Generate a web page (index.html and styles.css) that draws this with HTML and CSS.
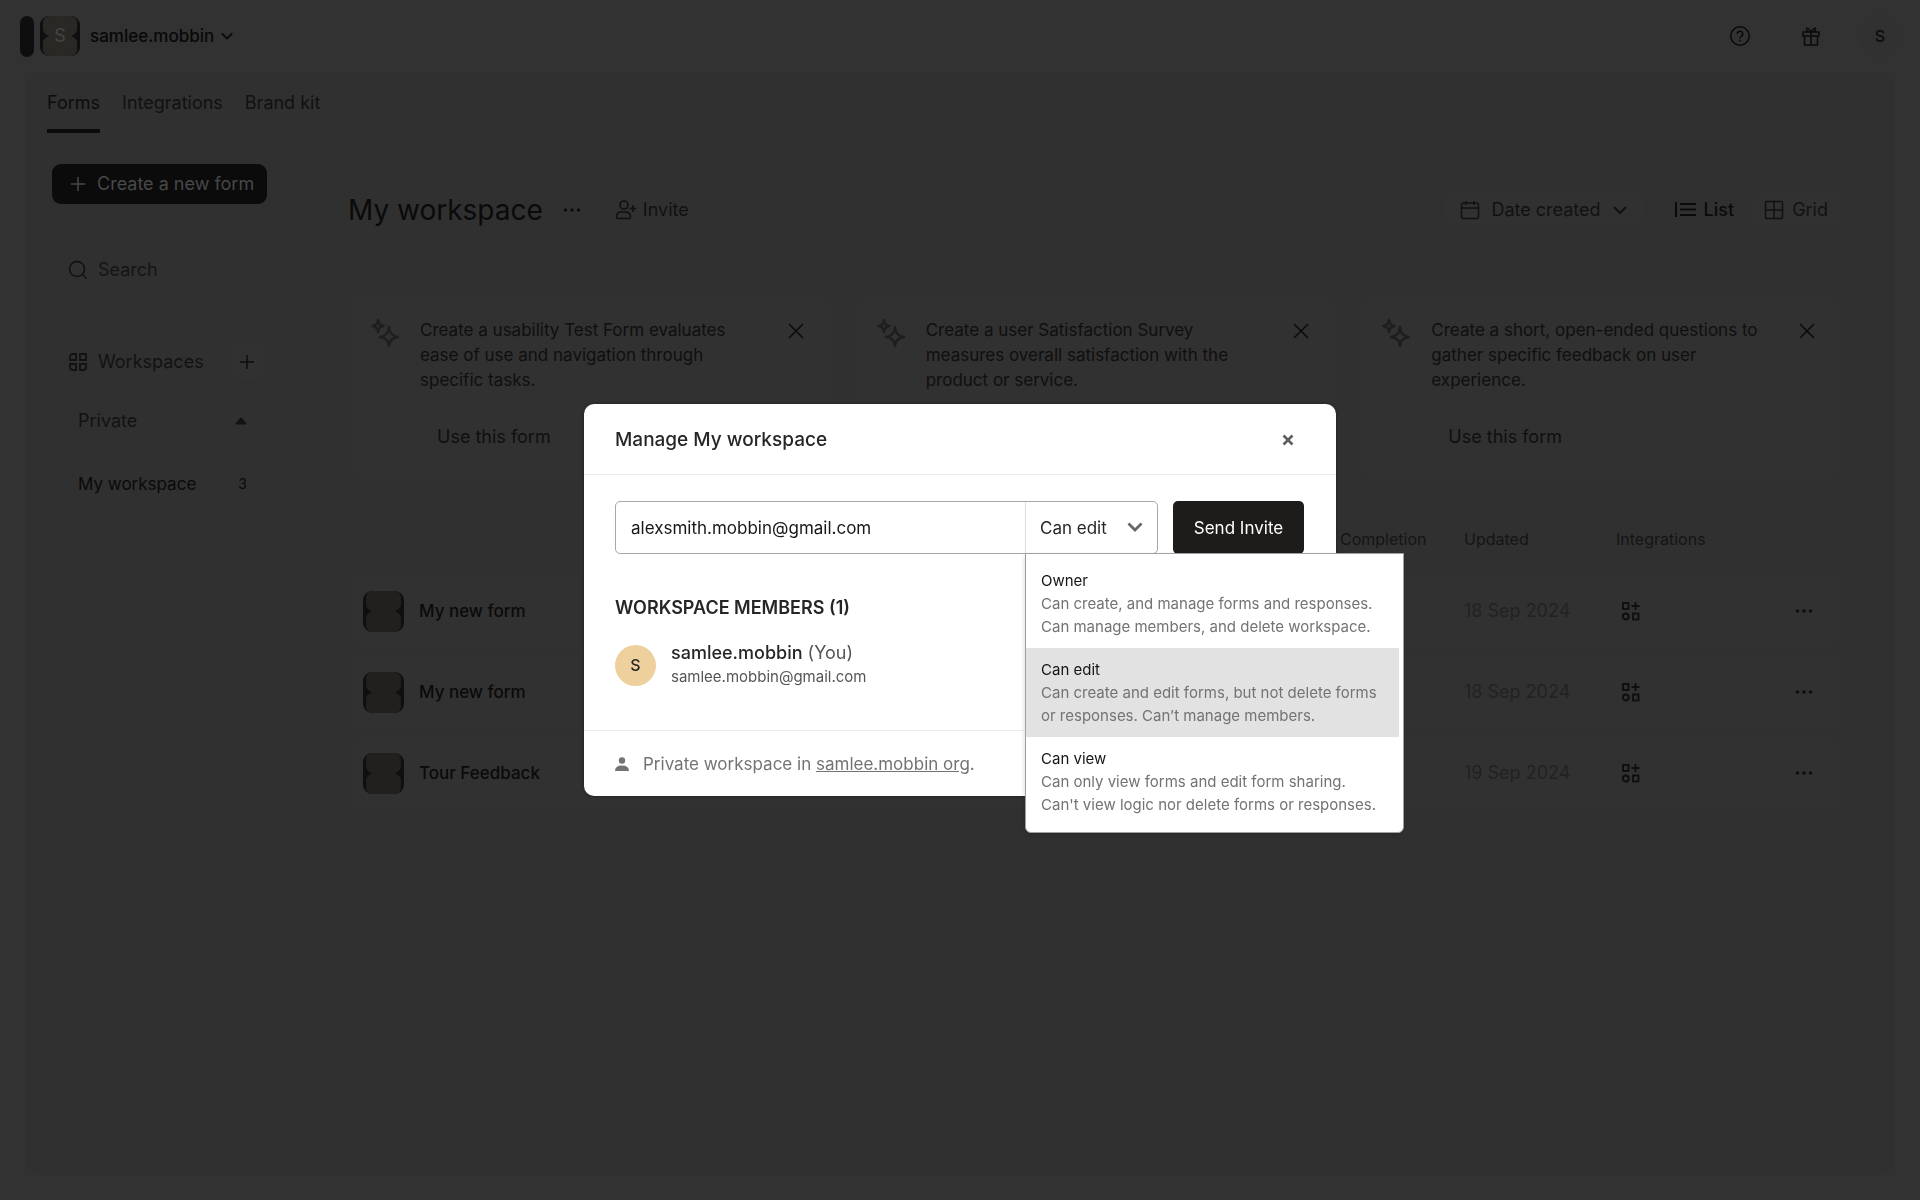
FILE: index.html
```html
<!DOCTYPE html>
<html lang="en">
<head>
<meta charset="utf-8">
<title>My workspace</title>
<meta name="viewport" content="width=device-width, initial-scale=1">
<link rel="stylesheet" href="styles.css">
</head>
<body>
<svg class="defs" aria-hidden="true">
  <symbol id="thumb" viewBox="0 0 40 40"><rect width="40" height="40" rx="9" fill="#0f0f0f"/><path d="M9 0H31Q36 1 37 5V14Q36 18 31 20Q36 22 37 25V35Q36 39 31 40H9Q4 39 3 35V25Q4 22 9 20Q4 18 3 14V5Q4 1 9 0Z" fill="currentColor"/></symbol>
  <symbol id="chevron" viewBox="0 0 16 16"><path d="M2 5l6 6 6-6" fill="none" stroke="currentColor" stroke-width="2"/></symbol>
  <symbol id="plus" viewBox="0 0 16 16"><path d="M8 1v14M1 8h14" fill="none" stroke="currentColor" stroke-width="1.5"/></symbol>
  <symbol id="cross" viewBox="0 0 16 16"><path d="M1 1l14 14M15 1L1 15" fill="none" stroke="currentColor" stroke-width="1.5"/></symbol>
  <symbol id="dots" viewBox="0 0 18 6"><circle cx="2.5" cy="3" r="1.8"/><circle cx="9" cy="3" r="1.8"/><circle cx="15.5" cy="3" r="1.8"/></symbol>
  <symbol id="spark" viewBox="0 0 30 30"><g fill="none" stroke="currentColor" stroke-width="2.4" stroke-linejoin="round"><path d="M8 2q.6 5.500 5.500 6q-4.900.5-5.500 6q-.6-5.500-5.500-6q4.900-.5 5.500-6z"/><path d="M19 9q.8 9.200 9 10q-8.200.8-9 9q-.8-8.200-9-9q8.200-.8 9-10z"/></g></symbol>
  <symbol id="apps" viewBox="0 0 20 20"><g fill="none" stroke="currentColor" stroke-width="1.8"><rect x="2" y="2" width="5.500" height="6"/><path d="M14.500 1v8M10.500 5h8"/><circle cx="4.800" cy="15.500" r="3"/><rect x="12" y="12.500" width="5.500" height="6"/></g></symbol>
</svg>

<header class="topbar">
  <span class="logo"></span>
  <span class="org-avatar"><svg width="40" height="40"><use href="#thumb"/></svg><span class="org-letter">S</span></span>
  <button class="org">samlee.mobbin <svg width="14" height="14"><use href="#chevron"/></svg></button>
  <div class="top-actions">
    <button aria-label="Help"><svg width="22" height="22" viewBox="0 0 22 22" fill="none" stroke="currentColor" stroke-width="1.500"><circle cx="11" cy="11" r="9.200"/><path d="M8.300 9a2.700 2.700 0 1 1 4 2.300q-1.300.8-1.300 2.200M11 14.800v1.700"/></svg></button>
    <button aria-label="Rewards"><svg width="20" height="20" viewBox="0 0 20 20" fill="none" stroke="currentColor" stroke-width="1.500"><path d="M2 6h16v4H2zM3.500 10v9h13v-9M10 6v13M10 6Q5 6 5.500 3T10 6Q15 6 14.500 3T10 6"/></svg></button>
    <button class="user">S</button>
  </div>
</header>

<main class="panel">
  <nav class="tabs">
    <a class="active" href="#">Forms</a><a href="#">Integrations</a><a href="#">Brand kit</a>
  </nav>
  <div class="columns">
    <aside class="sidebar">
      <button class="create"><svg width="16" height="16"><use href="#plus"/></svg>Create a new form</button>
      <label class="search"><svg width="20" height="20" viewBox="0 0 20 20" fill="none" stroke="currentColor" stroke-width="1.500"><circle cx="9" cy="9" r="7.500"/><path d="M14.500 14.500l4 4"/></svg><input type="search" placeholder="Search" aria-label="Search"></label>
      <div class="side-row head"><svg width="20" height="20" viewBox="0 0 20 20" fill="none" stroke="currentColor" stroke-width="1.800"><path d="M5 2h3v6H2V5q0-3 3-3zM12 2h6v6h-6zM2 12h6v6H5q-3 0-3-3zM12 12h6v3q0 3-3 3h-3z"/></svg><span>Workspaces</span><button aria-label="Add workspace"><svg width="16" height="16"><use href="#plus"/></svg></button></div>
      <div class="side-row private"><span>Private</span><svg width="12" height="8" viewBox="0 0 12 8"><path d="M1 7.500q-.8 0 0-1.500L5 1q1-.8 2 0l4 5q.8 1.500 0 1.500z"/></svg></div>
      <a class="side-row current" href="#"><span>My workspace</span><small>3</small></a>
    </aside>

    <section class="content">
      <div class="heading">
        <h1>My workspace</h1>
        <button class="more" aria-label="Workspace options"><svg width="18" height="6"><use href="#dots"/></svg></button>
        <button class="invite"><svg width="22" height="22" viewBox="0 0 22 22" fill="none" stroke="currentColor" stroke-width="1.600"><circle cx="9" cy="6" r="4"/><path d="M1.500 18q0-5 5-5h4q5 0 5 5q0 1.500-1.500 1.500h-11q-1.500 0-1.500-1.500zM18 6v7M14.500 9.500h7"/></svg>Invite</button>
        <div class="view-tools">
          <button class="sort"><svg width="20" height="20" viewBox="0 0 20 20" fill="none" stroke="currentColor" stroke-width="1.500"><rect x="1.500" y="3" width="17" height="15.500" rx="2"/><path d="M1.500 8h17M6 1v4M14 1v4"/></svg>Date created<svg width="16" height="16"><use href="#chevron"/></svg></button>
          <button class="list"><svg width="22" height="18" viewBox="0 0 22 18" fill="none" stroke="currentColor" stroke-width="2"><path d="M2 1v15M6 3h16M6 8.500h16M6 14h16"/></svg>List</button>
          <button class="grid"><svg width="20" height="20" viewBox="0 0 20 20" fill="none" stroke="currentColor" stroke-width="1.500"><rect x="1.500" y="1.500" width="17" height="17" rx="1"/><path d="M10 1.500v17M1.500 10h17"/></svg>Grid</button>
        </div>
      </div>

      <div class="cards">
        <article class="card"><svg class="spark" width="30" height="30"><use href="#spark"/></svg><div><p>Create a usability Test Form evaluates ease of use and navigation through specific tasks.</p><button>Use this form</button></div><button class="dismiss" aria-label="Dismiss"><svg width="16" height="16"><use href="#cross"/></svg></button></article>
        <article class="card"><svg class="spark" width="30" height="30"><use href="#spark"/></svg><div><p>Create a user Satisfaction Survey measures overall satisfaction with the product or service.</p></div><button class="dismiss" aria-label="Dismiss"><svg width="16" height="16"><use href="#cross"/></svg></button></article>
        <article class="card"><svg class="spark" width="30" height="30"><use href="#spark"/></svg><div><p>Create a short, open-ended questions to gather specific feedback on user experience.</p><button>Use this form</button></div><button class="dismiss" aria-label="Dismiss"><svg width="16" height="16"><use href="#cross"/></svg></button></article>
      </div>

      <table class="forms">
        <colgroup><col><col class="c-completion"><col class="c-updated"><col class="c-integrations"><col class="c-menu"></colgroup>
        <thead><tr><td></td><th>Completion</th><th>Updated</th><th>Integrations</th><td></td></tr></thead>
        <tbody>
          <tr><td><div class="name"><svg width="41" height="41"><use href="#thumb"/></svg>My new form</div></td><td></td><td class="date">18 Sep 2024</td><td><svg width="20" height="20"><use href="#apps"/></svg></td><td><button aria-label="Form options"><svg width="18" height="6"><use href="#dots"/></svg></button></td></tr>
          <tr><td><div class="name"><svg width="41" height="41"><use href="#thumb"/></svg>My new form</div></td><td></td><td class="date">18 Sep 2024</td><td><svg width="20" height="20"><use href="#apps"/></svg></td><td><button aria-label="Form options"><svg width="18" height="6"><use href="#dots"/></svg></button></td></tr>
          <tr><td><div class="name"><svg width="41" height="41"><use href="#thumb"/></svg>Tour Feedback</div></td><td></td><td class="date">19 Sep 2024</td><td><svg width="20" height="20"><use href="#apps"/></svg></td><td><button aria-label="Form options"><svg width="18" height="6"><use href="#dots"/></svg></button></td></tr>
        </tbody>
      </table>
    </section>
  </div>
</main>

<div class="overlay">
  <section class="modal" role="dialog" aria-labelledby="modal-title">
    <div class="modal-head">
      <h2 id="modal-title">Manage My workspace</h2>
      <button aria-label="Close"><svg width="12" height="12" viewBox="0 0 12 12"><path d="M1.500 1.500l9 9M10.500 1.500l-9 9" stroke="currentColor" stroke-width="2.600"/></svg></button>
    </div>
    <div class="modal-body">
      <form class="invite-form">
        <div class="field">
          <input type="email" value="alexsmith.mobbin@gmail.com" aria-label="Email address">
          <div class="role">
            <select aria-label="Role"><option>Owner</option><option selected>Can edit</option><option>Can view</option></select>
            <svg class="arrow" width="16" height="16" viewBox="0 0 16 16"><path d="M1.500 4.500L8 11l6.500-6.500" fill="none" stroke="currentColor" stroke-width="2.800"/></svg>
            <ul class="menu">
              <li><b>Owner</b><span>Can create, and manage forms and responses.<br>Can manage members, and delete workspace.</span></li>
              <li class="selected"><b>Can edit</b><span>Can create and edit forms, but not delete forms<br>or responses. Can’t manage members.</span></li>
              <li><b>Can view</b><span>Can only view forms and edit form sharing.<br>Can't view logic nor delete forms or responses.</span></li>
            </ul>
          </div>
        </div>
        <button class="send" type="button">Send Invite</button>
      </form>
      <h3>WORKSPACE MEMBERS (1)</h3>
      <div class="member">
        <span class="avatar">S</span>
        <div><p class="who"><b>samlee.mobbin</b> (You)</p><p class="mail">samlee.mobbin@gmail.com</p></div>
      </div>
    </div>
    <div class="modal-foot">
      <svg width="14" height="14" viewBox="0 0 14 14"><circle cx="7" cy="3.500" r="3.200"/><path d="M0 14q0-5.500 7-5.500t7 5.500z"/></svg>
      <p>Private workspace in <a href="#">samlee.mobbin org</a>.</p>
    </div>
  </section>
</div>
</body>
</html>
```
FILE: styles.css
```css
* { box-sizing: border-box; }
body { margin: 0; min-height: 100vh; display: flex; flex-direction: column; background: #323232; color: #0e0e0e; font: 18px/24px Inter, "Liberation Sans", sans-serif; }
h1, h2, h3, p, ul { margin: 0; padding: 0; font-weight: 400; }
button { border: 0; background: none; padding: 0; margin: 0; font: inherit; color: inherit; display: flex; align-items: center; }
a { color: inherit; text-decoration: none; }
svg { display: block; flex: none; }
.defs { position: absolute; width: 0; height: 0; }

.topbar { height: 72px; display: flex; align-items: center; padding: 0 20px; }
.logo { width: 14px; height: 41px; border-radius: 7px; background: #0e0e0e; margin-right: 6px; }
.org-avatar { position: relative; color: #2a2825; }
.org-letter { position: absolute; inset: 0; display: grid; place-items: center; color: #454341; font-size: 18px; }
.org { margin-left: 10px; gap: 6px; font-weight: 500; font-size: 17px; color: #080808; }
.top-actions { margin-left: auto; display: flex; align-items: center; gap: 50px; color: #0a0a0a; }
.top-actions .user { width: 42px; height: 42px; margin: 0 -1px 0 -12px; justify-content: center; border-radius: 50%; background: #313131; font-size: 16px; font-weight: 500; }

.panel { flex: 1; margin: 0 26px 25px; padding: 0 52px 0 21px; background: #303030; border-radius: 16px; }
.tabs { display: flex; gap: 22px; color: #111; }
.tabs a { padding: 19px 0 14px; border-bottom: 4px solid transparent; }
.tabs .active { border-color: #0b0b0b; color: #0c0c0c; }
.columns { display: flex; padding: 31px 0 0 5px; }

.sidebar { width: 215px; flex: none; }
.create { width: 100%; height: 40px; padding: 0 18px; gap: 11px; border-radius: 9px; background: #0b0b0b; color: #484848; white-space: nowrap; }
.search { display: flex; align-items: center; gap: 10px; padding: 54px 16px 0; color: #101010; }
.search input { width: 100%; min-width: 0; border: 0; padding: 0; height: 24px; background: none; font: inherit; color: inherit; outline: 0; }
.search input::placeholder { color: #151515; opacity: 1; }
.side-row { display: flex; align-items: center; padding: 0 20px 0 26px; color: #121212; }
.side-row span { flex: 1; }
.side-row.head { height: 36px; margin-top: 62px; padding: 0 2px 0 16px; gap: 10px; }
.side-row.head button { width: 36px; height: 36px; justify-content: center; border-radius: 8px; background: #313131; color: #0c0c0c; }
.side-row.private { margin-top: 29px; }
.side-row.current { margin-top: 39px; font-size: 17px; color: #0a0a0a; }
.side-row small { font-size: 14px; }

.content { flex: 1; min-width: 0; padding: 25px 0 0 83px; }
.heading { display: flex; align-items: center; height: 41px; margin-left: -2px; }
h1 { font-size: 28px; line-height: 40px; color: #0a0a0a; }
.more { margin-left: 20px; }
.invite { margin-left: 34px; gap: 6px; color: #101010; }
.view-tools { margin-left: auto; display: flex; align-items: center; color: #111; }
.view-tools button { height: 34px; border-radius: 6px; }
.sort { padding: 0 16px; gap: 11px; margin-right: 16px; }
.sort, .view-tools .grid { background: #313131; }
.list { padding: 0 18px 0 14px; gap: 8px; color: #0a0a0a; font-weight: 500; }
.view-tools .grid { padding: 0 14px 0 12px; gap: 8px; }

.cards { display: grid; grid-template-columns: repeat(3, 1fr); gap: 25px; margin-top: 66px; }
.card { display: flex; min-height: 182px; padding: 22px 27px 0 20px; border-radius: 10px; background: #313131; color: #0f0f0f; }
.card .spark { color: #1e1e1e; margin-right: 20px; }
.card div { flex: 1; min-width: 0; }
.card p { font-size: 17px; line-height: 25px; max-width: 336px; }
.card div button { margin: 32px 0 0 17px; }
.dismiss { height: 25px; color: #0a0a0a; }

.forms { width: 100%; table-layout: fixed; border-spacing: 0 9px; margin-top: 40px; }
.forms th { text-align: left; font-weight: 400; font-size: 16px; color: #151515; }
.forms td, .forms th { padding: 0; }
.forms thead tr { height: 39px; }
.forms thead th { vertical-align: top; }
.c-completion { width: 124px; }
.c-updated { width: 152px; }
.c-integrations { width: 179px; }
.c-menu { width: 47px; }
.forms tbody td { height: 72px; background: #313131; }
.forms tbody td:first-child { border-radius: 10px 0 0 10px; }
.forms tbody td:last-child { border-radius: 0 10px 10px 0; }
.forms tbody td > svg { margin-left: 5px; }
.name { display: flex; align-items: center; gap: 15px; padding-left: 13px; font-weight: 500; font-size: 17px; color: #0a0a0a; }
.name svg { color: #22201e; }
.forms .date { color: #222; }

.overlay { position: fixed; inset: 0; display: flex; align-items: center; justify-content: center; color: #262627; }
.modal { width: 752px; border-radius: 10px; background: #fff; box-shadow: 0 0 3px #1c1c1c; }
.modal-head { display: flex; align-items: center; justify-content: space-between; height: 71px; padding: 2px 42px 0 31px; border-bottom: 1px solid #ececec; }
h2 { font-size: 19px; font-weight: 500; }
.modal-head button { color: #5e5e5e; }
.modal-body { padding: 26px 32px 41px 31px; }
.invite-form { display: flex; gap: 15px; }
.field { flex: 1; height: 53px; display: flex; border: 1px solid #a8a8a8; border-radius: 5px; color: #161616; font-size: 17px; }
.field input { flex: 1; min-width: 0; border: 0; padding: 0 15px; background: none; font: inherit; color: inherit; outline: 0; }
.role { position: relative; width: 132px; border-left: 1px solid #ddd; }
select { width: 100%; height: 100%; border: 0; padding: 0 14px; appearance: none; background: none; font: inherit; color: #262627; outline: 0; }
.arrow { position: absolute; right: 14px; top: 17px; color: #666; pointer-events: none; }
.menu { position: absolute; top: 51px; left: -1px; width: 379px; padding: 5px 4px 6px 0; list-style: none; background: #fff; border: 1px solid #a0a0a0; border-radius: 0 0 6px 6px; box-shadow: -1px 2px 4px rgba(0,0,0,.12); font-size: 15px; line-height: 23px; white-space: nowrap; }
.menu li { padding: 10px 0 10px 15px; }
.menu .selected { background: #e2e2e2; }
.menu b { display: block; font-weight: 400; }
.menu span { color: #737373; }
.send { width: 131px; height: 53px; justify-content: center; border-radius: 5px; background: #1e1c1a; color: #fff; font-size: 17px; }
h3 { margin-top: 42px; font-weight: 600; font-size: 18px; }
.member { display: flex; align-items: center; gap: 15px; margin-top: 21px; }
.avatar { width: 41px; height: 41px; border-radius: 50%; background: #edd09c; display: grid; place-items: center; font-size: 16px; font-weight: 500; }
.who { color: #555; }
.who b { font-weight: 500; color: #262627; }
.mail { font-size: 15px; color: #555; }
.modal-foot { display: flex; align-items: center; gap: 14px; height: 66px; padding: 0 31px; border-top: 1px solid #ececec; color: #737373; font-size: 17px; }
.modal-foot a { text-decoration: underline; }
.modal-foot svg, .more svg, .forms svg, .private svg { fill: currentColor; }
```
